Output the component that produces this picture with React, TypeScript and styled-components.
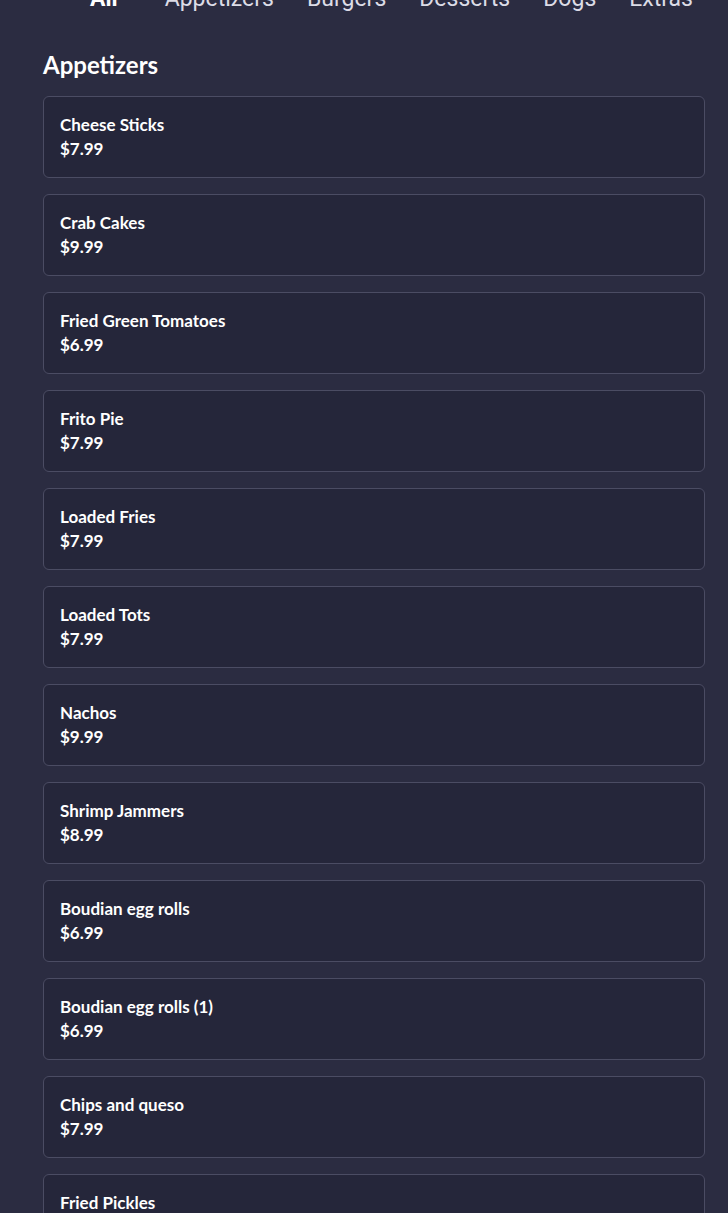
import { VFC } from 'react'
import styled, { createGlobalStyle } from 'styled-components'

type itemType = {
  name: string
  price: string
}

const tabs = ['All', 'Appetizers', 'Burgers', 'Desserts', 'Dogs', 'Extras']

const items: itemType[] = [
  { name: 'Cheese Sticks', price: '$7.99' },
  { name: 'Crab Cakes', price: '$9.99' },
  { name: 'Fried Green Tomatoes', price: '$6.99' },
  { name: 'Frito Pie', price: '$7.99' },
  { name: 'Loaded Fries', price: '$7.99' },
  { name: 'Loaded Tots', price: '$7.99' },
  { name: 'Nachos', price: '$9.99' },
  { name: 'Shrimp Jammers', price: '$8.99' },
  { name: 'Boudian egg rolls', price: '$6.99' },
  { name: 'Boudian egg rolls (1)', price: '$6.99' },
  { name: 'Chips and queso', price: '$7.99' },
  { name: 'Fried Pickles', price: '$6.99' },
]

const MenuItem: VFC<{ item: itemType }> = ({ item }) => {
  return (
    <SCard>
      <SName>{item.name}</SName>
      <SPrice>{item.price}</SPrice>
    </SCard>
  )
}

export default function App() {
  return (
    <>
      <GlobalStyle />
      <SPage>
        <STabBar>
          {tabs.map((tab, i) => (
            <STab key={tab} active={i === 0}>
              {tab}
            </STab>
          ))}
        </STabBar>
        <SSection>
          <STitle>Appetizers</STitle>
          <SList>
            {items.map((item, i) => (
              <MenuItem key={i} item={item} />
            ))}
          </SList>
        </SSection>
      </SPage>
    </>
  )
}

const GlobalStyle = createGlobalStyle`
  html, body {
    margin: 0;
    padding: 0;
    background: #2b2c41;
    overflow: hidden;
  }
`

const SPage = styled.div`
  background: #2b2c41;
  min-height: 1213px;
  font-family: Lato, 'Noto Sans', sans-serif;
  color: #ffffff;
`

const STabBar = styled.div`
  display: flex;
  align-items: center;
  gap: 33px;
  padding-left: 90px;
  margin-top: -14px;
  height: 25px;
  white-space: nowrap;
  overflow: hidden;
`

const STab = styled.div<{ active: boolean }>`
  font-family: Roboto, sans-serif;
  font-size: 23px;
  line-height: 25px;
  color: ${(p) => (p.active ? '#ffffff' : '#dcdce6')};
  font-weight: ${(p) => (p.active ? 700 : 400)};
  margin-right: ${(p) => (p.active ? '14px' : '0')};
`

const SSection = styled.div`
  padding: 40px 23px 0 43px;
`

const STitle = styled.h2`
  margin: 0 0 17px;
  font-size: 24px;
  line-height: 28px;
  font-weight: 700;
`

const SList = styled.div`
  display: flex;
  flex-direction: column;
  gap: 16px;
`

const SCard = styled.div`
  background: #25263a;
  border: 1px solid #4b4c63;
  border-radius: 6px;
  height: 82px;
  box-sizing: border-box;
  padding: 18px 16px;
  display: flex;
  flex-direction: column;
  gap: 4px;
`

const SName = styled.div`
  font-size: 17px;
  line-height: 20px;
  font-weight: 700;
`

const SPrice = styled.div`
  font-size: 17px;
  line-height: 20px;
  font-weight: 700;
`
